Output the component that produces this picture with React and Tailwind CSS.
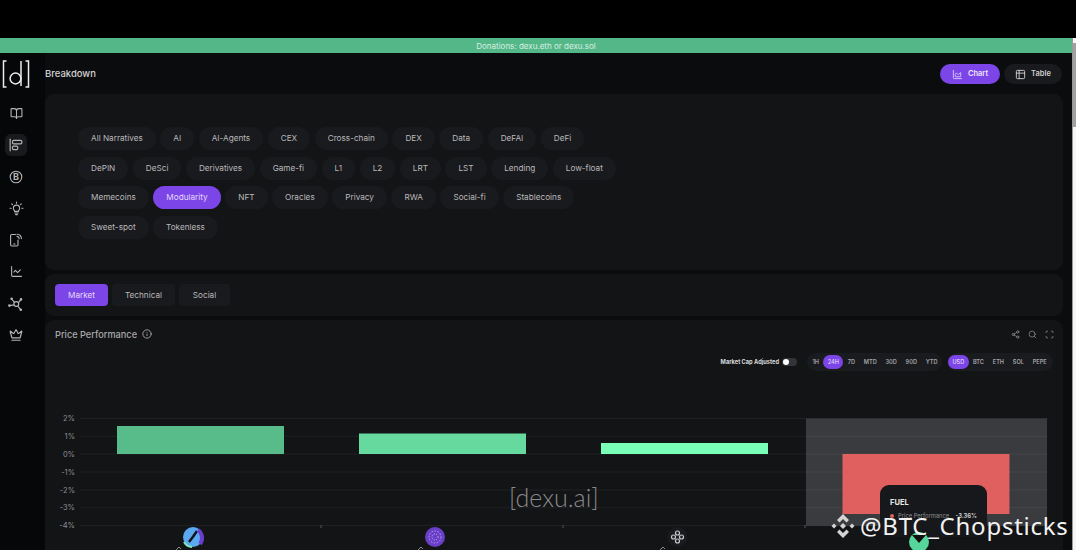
import React from "react";
import { BookOpen, AlignStartVertical, ChartLine, Crown, Info, Share2, Search, Scan, Table2, ChartArea } from "lucide-react";

const rows = [
  ["All Narratives", "AI", "AI-Agents", "CEX", "Cross-chain", "DEX", "Data", "DeFAI", "DeFi"],
  ["DePIN", "DeSci", "Derivatives", "Game-fi", "L1", "L2", "LRT", "LST", "Lending", "Low-float"],
  ["Memecoins", "Modularity", "NFT", "Oracles", "Privacy", "RWA", "Social-fi", "Stablecoins"],
  ["Sweet-spot", "Tokenless"],
];
const ranges = ["1H", "24H", "7D", "MTD", "30D", "90D", "YTD"];
const currencies = ["USD", "BTC", "ETH", "SOL", "PEPE"];
const ticks = [["2%", 418.5], ["1%", 436.3], ["0%", 454], ["-1%", 472], ["-2%", 490], ["-3%", 507.7], ["-4%", 525.5]];

function Logo() {
  return (
    <svg width="28" height="28" viewBox="0 0 28 28" fill="none" stroke="#ececec" strokeWidth="1.5">
      <path d="M4.5 1H1.5V27H4.5" />
      <path d="M23.5 1H26.5V27H23.5" />
      <circle cx="13.5" cy="18.5" r="5.4" />
      <path d="M19 1V26" />
    </svg>
  );
}

function Bitcoin() {
  return (
    <svg width="14" height="14" viewBox="0 0 14 14" fill="none">
      <circle cx="7" cy="7" r="5.8" stroke="#b5b5b5" strokeWidth="1.1" />
      <text x="7" y="10.2" textAnchor="middle" fontSize="9" fontWeight="700" fill="#b5b5b5" fontFamily="Inter">B</text>
    </svg>
  );
}

function Bulb() {
  return (
    <svg width="15" height="15" viewBox="0 0 15 15" fill="none" stroke="#b5b5b5" strokeWidth="1.1" strokeLinecap="round">
      <path d="M5.6 10.4C5.4 9.2 4.4 8.8 4.4 7.2A3.1 3.1 0 0 1 10.6 7.2C10.6 8.8 9.6 9.2 9.4 10.4Z" />
      <path d="M5.9 12H9.1M6.6 13.6H8.4" />
      <path d="M7.5 1V2.2M2.7 2.9 3.5 3.7M12.3 2.9 11.5 3.7M1 7.2H2.2M12.8 7.2H14" />
    </svg>
  );
}

function PhoneSignal() {
  return (
    <svg width="14" height="14" viewBox="0 0 14 14" fill="none" stroke="#b5b5b5" strokeWidth="1.1" strokeLinecap="round">
      <path d="M6.5 1.5H2.8A1.2 1.2 0 0 0 1.6 2.7V11.8A1.2 1.2 0 0 0 2.8 13H7.8A1.2 1.2 0 0 0 9 11.8V7" />
      <path d="M8 1.2A4.6 4.6 0 0 1 12.4 5.6" />
      <path d="M8 3.4A2.4 2.4 0 0 1 10.2 5.6" />
      <path d="M4.6 11H6" />
    </svg>
  );
}

function Nodes() {
  return (
    <svg width="16" height="16" viewBox="0 0 16 16" fill="none" stroke="#b5b5b5" strokeWidth="1.2">
      <circle cx="8.3" cy="8" r="2.4" />
      <path d="M6.4 6.4 4 3.4M10.4 6.6 12.6 4M6 8.8 1.8 9.6M9.8 10 12.4 13.4" />
      <circle cx="3.6" cy="2.8" r="0.7" fill="#b5b5b5" />
      <circle cx="13" cy="3.4" r="0.7" fill="#b5b5b5" />
      <circle cx="1.4" cy="9.6" r="0.7" fill="#b5b5b5" />
      <circle cx="12.8" cy="13.8" r="0.7" fill="#b5b5b5" />
    </svg>
  );
}

function Sidebar() {
  const cls = "text-[#b5b5b5]";
  const items = [
    <BookOpen key="a" size={13} className={cls} />,
    <AlignStartVertical key="b" size={14} className={cls} />,
    <Bitcoin key="c" />,
    <Bulb key="d" />,
    <PhoneSignal key="e" />,
    <ChartLine key="f" size={13} className={cls} />,
    <Nodes key="g" />,
    <Crown key="h" size={14} className={cls} />,
  ];
  return (
    <aside className="flex h-full w-[45px] shrink-0 flex-col bg-[#060709]">
      <div className="flex h-[41px] items-center pl-[2px] pt-[1px]"><Logo /></div>
      <div className="flex w-[32px] flex-col items-center gap-[9.75px] pt-[8px]">
        {items.map((icon, i) => (
          <div key={i} className={`flex h-[22px] w-[22px] items-center justify-center rounded-[6px] ${i === 1 ? "bg-[#191a1d]" : ""}`}>{icon}</div>
        ))}
      </div>
    </aside>
  );
}

function Pills() {
  return (
    <div className="flex flex-col gap-[6.5px]">
      {rows.map((row, i) => (
        <div key={i} className="flex gap-[4.5px]">
          {row.map((p) => (
            <div key={p} className={`flex h-[23px] items-center rounded-full px-[13px] text-[8.2px] ${p === "Modularity" ? "bg-[#7c45e8] text-[#e4d8fb]" : "bg-[#191a1d] text-[#b9b9bb]"}`}>{p}</div>
          ))}
        </div>
      ))}
    </div>
  );
}

function Segment({ items, active, className }) {
  return (
    <div className={`flex h-[18px] items-center rounded-full bg-[#1a1b1e] px-[1px] ${className}`}>
      {items.map((x) => (
        <span key={x} className={`flex h-[14px] items-center rounded-full px-[4.4px] text-[5.6px] font-semibold ${x === active ? "bg-[#7c45e8] text-[#d9c8fa]" : "text-[#a5a5a8]"}`}>{x}</span>
      ))}
    </div>
  );
}

function Chart() {
  return (
    <div className="relative h-[145px] w-full">
      <svg width="1018" height="145" viewBox="45 405 1018 145">
        {ticks.map(([t, y]) => (
          <g key={t}>
            <line x1="80" x2="1048" y1={y} y2={y} stroke="#1f2023" strokeWidth="1" />
            <text x="75" y={y + 2.5} textAnchor="end" fontSize="7.5" fill="#8d8e91" fontFamily="Inter">{t}</text>
          </g>
        ))}
        <rect x="806" y="418.5" width="241" height="107.5" fill="#3a3b3e" />
        {[436.3, 454, 472, 490, 507.7].map((y) => (
          <line key={y} x1="806" x2="1047" y1={y} y2={y} stroke="#46474a" strokeWidth="1" />
        ))}
        <rect x="117" y="426" width="167" height="28" fill="#57bb8a" />
        <rect x="359" y="433.5" width="167" height="20.5" fill="#66d99f" />
        <rect x="601" y="443" width="167" height="11" fill="#7affb9" />
        <rect x="842.5" y="454" width="167" height="60" fill="#e06060" />
        <line x1="321" x2="321" y1="525" y2="528" stroke="#555" />
        <line x1="563" x2="563" y1="525" y2="528" stroke="#555" />
        <line x1="805" x2="805" y1="525" y2="528" stroke="#555" />

        <circle cx="193" cy="537" r="10" fill="#5aa8ee" />
        <path d="M189 542 Q193 537 197 531" stroke="#10141a" strokeWidth="2.4" fill="none" />
        <path d="M198 530 A10 10 0 0 1 200 544" stroke="#6a3fd0" strokeWidth="4" fill="none" />
        <path d="M184 542 A10 10 0 0 0 192 547" stroke="#7fe6c0" strokeWidth="2" fill="none" />

        <circle cx="435" cy="537" r="10" fill="#6a3fc8" />
        <circle cx="435" cy="537" r="6" fill="none" stroke="#b7a0ee" strokeWidth="1" strokeDasharray="1.5 1.5" />
        <circle cx="435" cy="537" r="3" fill="none" stroke="#c9b8f2" strokeWidth="1" strokeDasharray="1 1.5" />

        <circle cx="677.5" cy="537" r="10" fill="#1a1b1e" />
        <g fill="none" stroke="#c9c9c9" strokeWidth="1.2">
          <circle cx="677.5" cy="533" r="2" />
          <circle cx="677.5" cy="541" r="2" />
          <circle cx="673.5" cy="537" r="2" />
          <circle cx="681.5" cy="537" r="2" />
        </g>

        <path d="M176 550 L179 547 L181 549" stroke="#8a8a8a" fill="none" />
        <path d="M418 550 L421 547 L423 549" stroke="#8a8a8a" fill="none" />
        <path d="M660 550 L663 547 L665 549" stroke="#8a8a8a" fill="none" />
      </svg>

      <div className="absolute left-[464px] top-[80px] font-['Lato'] text-[25px] font-light leading-none text-[#8a8a8c]">[dexu.ai]</div>

      <div className="absolute left-[835px] top-[80px] flex h-[52px] w-[107px] flex-col gap-[5px] rounded-[9px] bg-[#17181b] px-[10px] pt-[13px]">
        <div className="text-[7.5px] font-bold leading-[9px] text-[#e8e8e8]">FUEL</div>
        <div className="flex items-center whitespace-nowrap text-[5.8px] leading-[8px] text-[#8f8f92]">
          <span className="mr-[4px] h-[4px] w-[4px] shrink-0 rounded-full bg-[#e06060]" />
          <span>Price Performance</span>
          <span className="ml-auto font-bold text-[#c9c9c9]">-3.36%</span>
        </div>
      </div>

      <svg className="absolute left-[864px] top-[127px]" width="20" height="20" viewBox="0 0 20 20">
        <circle cx="10" cy="10" r="10" fill="#56d69a" />
        <path d="M3 3 L10 11 L17 3Z" fill="#111" />
      </svg>
    </div>
  );
}

export default function App() {
  return (
    <div className="relative flex h-[550px] w-[1076px] flex-col overflow-hidden bg-black pt-[38px] font-['Inter',sans-serif]">
      <div className="flex min-h-0 flex-1">
        <div className="flex min-w-0 flex-1 flex-col">
          <div className="flex h-[15px] shrink-0 items-center justify-center bg-[#54b788] text-[8px] text-[#d7efe3]">Donations: dexu.eth or dexu.sol</div>
          <div className="flex min-h-0 flex-1">
            <Sidebar />
            <main className="flex min-w-0 flex-1 flex-col bg-[#0b0c0e] pr-[9px]">
              <header className="flex h-[41px] shrink-0 items-center justify-between">
                <div className="pt-[1px] text-[9.5px] font-medium text-[#d2d2d3]">Breakdown</div>
                <div className="flex gap-[4px] pr-[1px] pt-[1px]">
                  <div className="flex h-[20px] w-[60px] items-center justify-center gap-[5px] rounded-full bg-[#7c45e8] text-[7.5px] font-semibold text-[#eee6fd]">
                    <ChartArea size={11} className="text-[#d9c8fa]" />Chart
                  </div>
                  <div className="flex h-[20px] w-[58px] items-center justify-center gap-[5px] rounded-full bg-[#191a1d] text-[7.5px] font-semibold text-[#cfcfd0]">
                    <Table2 size={11} />Table
                  </div>
                </div>
              </header>

              <section className="flex h-[176px] shrink-0 flex-col rounded-[9px] bg-[#131416] pl-[33px] pt-[33px]">
                <Pills />
              </section>

              <section className="mt-[4px] flex h-[42px] shrink-0 items-center gap-[4px] rounded-[9px] bg-[#131416] pl-[10px]">
                <div className="flex h-[22px] w-[53px] items-center justify-center rounded-[4px] bg-[#7c45e8] text-[8.2px] text-[#e4d8fb]">Market</div>
                <div className="flex h-[22px] w-[63px] items-center justify-center rounded-[4px] bg-[#191a1d] text-[8.2px] text-[#b9b9bb]">Technical</div>
                <div className="flex h-[22px] w-[51px] items-center justify-center rounded-[4px] bg-[#191a1d] text-[8.2px] text-[#b9b9bb]">Social</div>
              </section>

              <section className="mt-[4px] flex min-h-0 flex-1 flex-col overflow-hidden rounded-t-[9px] bg-[#131416]">
                <div className="flex h-[29px] shrink-0 items-center justify-between pl-[10px] pr-[9px]">
                  <div className="flex items-center gap-[5px] text-[9.2px] font-medium text-[#a9a9ab]">
                    Price Performance <Info size={10} className="text-[#b5b5b5]" />
                  </div>
                  <div className="flex items-center gap-[8px] text-[#8f8f92]">
                    <Share2 size={9} />
                    <Search size={9} />
                    <Scan size={9} />
                  </div>
                </div>
                <div className="flex h-[56px] shrink-0 items-start justify-end gap-[5px] pr-[10px] pt-[4px]">
                  <div className="flex h-[18px] items-center gap-[3px] pr-[5px]">
                    <span className="text-[5.7px] font-bold text-[#dcdcdc]">Market Cap Adjusted</span>
                    <span className="flex h-[8px] w-[15px] items-center rounded-full bg-[#33343a] pl-[1px]">
                      <span className="h-[6px] w-[6px] rounded-full bg-white" />
                    </span>
                  </div>
                  <Segment items={ranges} active="24H" className="w-[135px]" />
                  <Segment items={currencies} active="USD" className="w-[106px]" />
                </div>
                <Chart />
              </section>
            </main>
          </div>
        </div>
        <div className="h-full w-[4px] shrink-0 border-l border-[#9a9a9a] bg-[#f6f6f6]">
          <div className="mt-[5px] h-[84px] w-full bg-[#a0a0a0]" />
        </div>
      </div>

      <div className="absolute left-[829px] top-[512px] flex items-center gap-[3px]">
        <svg width="28" height="28" viewBox="0 0 28 28" fill="#d4d4d4">
          <path d="M14 2 20 8 17.5 10.5 14 7 10.5 10.5 8 8Z" />
          <path d="M14 26 20 20 17.5 17.5 14 21 10.5 17.5 8 20Z" />
          <path d="M5 11.5 7.5 14 5 16.5 2.5 14Z" />
          <path d="M23 11.5 25.5 14 23 16.5 20.5 14Z" />
          <path d="M14 11 17 14 14 17 11 14Z" />
        </svg>
        <span className="font-['Noto_Sans',sans-serif] text-[24px] leading-none tracking-[0.75px] text-[#f2f2f2]">@BTC_Chopsticks</span>
      </div>
    </div>
  );
}
